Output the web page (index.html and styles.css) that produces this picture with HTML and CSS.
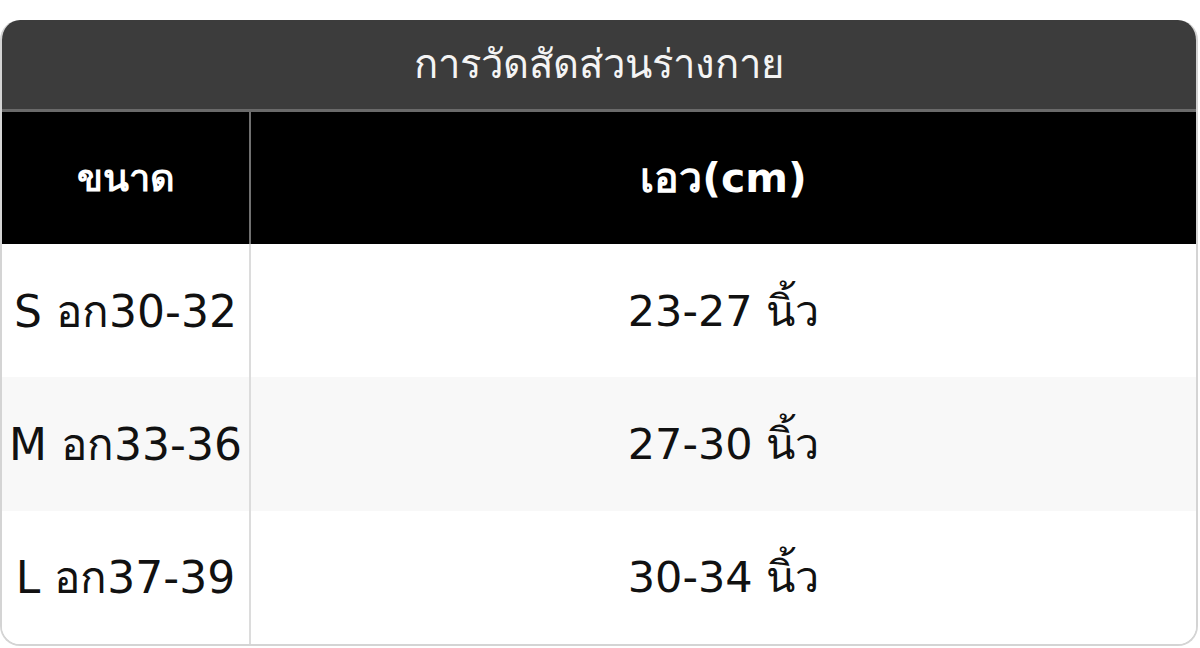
FILE: index.html
```html
<!DOCTYPE html>
<html lang="th">
<head>
<meta charset="utf-8">
<link rel="stylesheet" href="styles.css">
</head>
<body>
<div class="card">
  <div class="title">การวัดสัดส่วนร่างกาย</div>
  <div class="row head">
    <div class="cell size">ขนาด</div>
    <div class="cell val">เอว(cm)</div>
  </div>
  <div class="row">
    <div class="cell size">S อก30-32</div>
    <div class="cell val">23-27 นิ้ว</div>
  </div>
  <div class="row alt">
    <div class="cell size">M อก33-36</div>
    <div class="cell val">27-30 นิ้ว</div>
  </div>
  <div class="row">
    <div class="cell size">L อก37-39</div>
    <div class="cell val">30-34 นิ้ว</div>
  </div>
</div>
</body>
</html>
```
FILE: styles.css
```css
html, body {
  margin: 0;
  padding: 0;
  background: #ffffff;
}
body {
  font-family: "DejaVu Sans", "Noto Sans", sans-serif;
  padding-top: 20px;
}
.card {
  width: 1198px;
  height: 626px;
  box-sizing: border-box;
  border: 2px solid #d4d4d4;
  border-top: none;
  border-radius: 20px;
  overflow: hidden;
  display: flex;
  flex-direction: column;
}
.title {
  height: 89px;
  background: #3c3c3c;
  color: #f4f4f4;
  font-size: 40px;
  display: flex;
  align-items: center;
  justify-content: center;
  border-bottom: 3px solid #6a6a6a;
}
.row {
  display: flex;
  height: 134px;
  background: #ffffff;
}
.row.alt {
  background: #f8f8f8;
}
.row.head {
  height: 133px;
  background: #000000;
  color: #ffffff;
  font-weight: bold;
}
.cell {
  display: flex;
  align-items: center;
  justify-content: center;
  white-space: nowrap;
}
.cell.size {
  width: 247px;
  border-right: 2px solid #dcdcdc;
  font-size: 44px;
}
.head .cell.size {
  border-right-color: #707070;
  font-size: 38px;
}
.cell.val {
  flex: 1;
  font-size: 43px;
}
.head .cell.val {
  font-size: 41px;
}
.row:not(.head) .cell {
  color: #111111;
}
```
